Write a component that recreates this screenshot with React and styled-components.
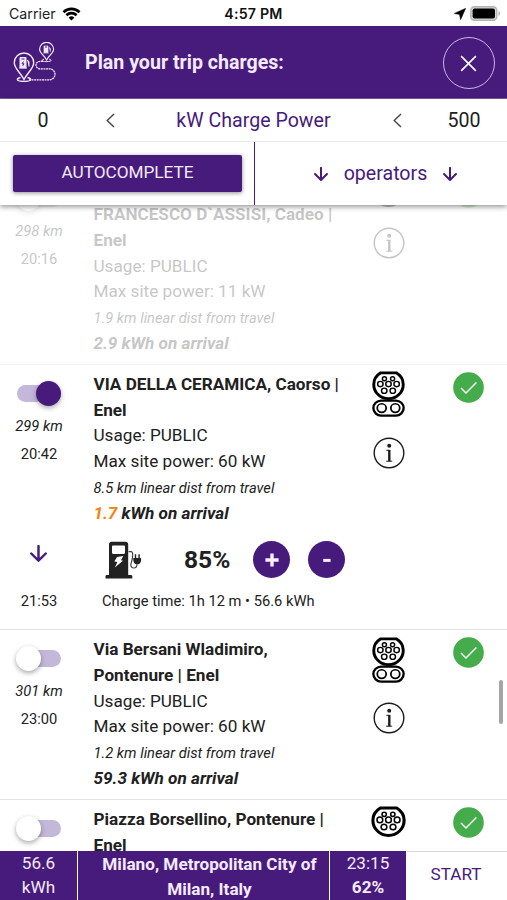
import styled, { createGlobalStyle } from "styled-components";

const stops = [
  {
    name: "\nFRANCESCO D`ASSISI, Cadeo |\nEnel",
    km: 298,
    time: "20:16",
    power: 11,
    distance: "1.9",
    arrival: "2.9",
    connectors: ["type2"],
    disabled: true,
  },
  {
    name: "VIA DELLA CERAMICA, Caorso |\nEnel",
    km: 299,
    time: "20:42",
    power: 60,
    distance: "8.5",
    arrival: "1.7",
    connectors: ["type2", "dc"],
    low: true,
    charge: { end: "21:53", level: 85, text: "Charge time: 1h 12 m • 56.6 kWh" },
  },
  {
    name: "Via Bersani Wladimiro,\nPontenure | Enel",
    km: 301,
    time: "23:00",
    power: 60,
    distance: "1.2",
    arrival: "59.3",
    connectors: ["type2", "dc"],
  },
  {
    name: "Piazza Borsellino, Pontenure |\nEnel",
    connectors: ["type2"],
  },
];

export default function App() {
  return (
    <Screen>
      <GlobalStyle />
      <StatusBar>
        <Carrier>
          Carrier <WifiIcon />
        </Carrier>
        <Clock>4:57 PM</Clock>
        <StatusIcons>
          <LocationIcon />
          <BatteryIcon />
        </StatusIcons>
      </StatusBar>

      <Header>
        <TripIcon />
        <HeaderTitle>Plan your trip charges:</HeaderTitle>
        <CloseButton aria-label="close">
          <svg width="17" height="17" viewBox="0 0 18 18" fill="none" stroke="#fff" strokeWidth="1.7">
            <path d="M1.2 1.2l15.6 15.6M16.8 1.2L1.2 16.8" />
          </svg>
        </CloseButton>
      </Header>

      <Filters>
        <PowerRow>
          <span>0</span>
          <Chevron />
          <PowerLabel>kW Charge Power</PowerLabel>
          <Chevron />
          <span>500</span>
        </PowerRow>
        <ActionRow>
          <ActionCell>
            <AutoButton>AUTOCOMPLETE</AutoButton>
          </ActionCell>
          <Operators>
            <ArrowDown size={14} />
            <span>operators</span>
            <ArrowDown size={14} />
          </Operators>
        </ActionRow>
      </Filters>

      <List>
        <Stops>
          {stops.map((stop) => (
            <Stop key={stop.name} stop={stop} />
          ))}
        </Stops>
        <ScrollThumb />
      </List>

      <Footer>
        <FooterCell>
          56.6
          <br />
          kWh
        </FooterCell>
        <Destination>
          Milano, Metropolitan City of
          <br />
          Milan, Italy
        </Destination>
        <FooterCell>
          23:15
          <br />
          <b>62%</b>
        </FooterCell>
        <StartButton>START</StartButton>
      </Footer>
    </Screen>
  );
}

function Stop({ stop }) {
  return (
    <StopItem $disabled={stop.disabled}>
      <StopRow>
        <TimeColumn>
          <Toggle $on={!!stop.charge}>
            <Knob $on={!!stop.charge} />
          </Toggle>
          {stop.km && <Km>{stop.km} km</Km>}
          {stop.time && <Time>{stop.time}</Time>}
        </TimeColumn>
        <Info>
          <Name>{stop.name}</Name>
          {stop.power && (
            <>
              <div>Usage: PUBLIC</div>
              <div>Max site power: {stop.power} kW</div>
              <Distance>{stop.distance} km linear dist from travel</Distance>
              <Arrival>
                <Energy $low={stop.low}>{stop.arrival}</Energy> kWh on arrival
              </Arrival>
            </>
          )}
        </Info>
        <Connectors>
          {stop.connectors.includes("dc") ? <ComboIcon /> : <Type2Icon />}
          {stop.power && <InfoIcon />}
        </Connectors>
        <StatusColumn>
          <CheckIcon />
        </StatusColumn>
      </StopRow>
      {stop.charge && (
        <ChargePanel>
          <ChargeControls>
            <ArrowCell>
              <ArrowDown size={17} />
            </ArrowCell>
            <PumpIcon />
            <Level>{stop.charge.level}%</Level>
            <RoundButton>
              <svg width="14" height="14" viewBox="0 0 14 14" stroke="#f6effd" strokeWidth="3.4">
                <path d="M7 .4v13.2M.4 7h13.2" />
              </svg>
            </RoundButton>
            <RoundButton>
              <svg width="14" height="14" viewBox="0 0 14 14" stroke="#f6effd" strokeWidth="3">
                <path d="M3.2 7.4h7.4" />
              </svg>
            </RoundButton>
          </ChargeControls>
          <ChargeSummary>
            <ChargeEnd>{stop.charge.end}</ChargeEnd>
            <span>{stop.charge.text}</span>
          </ChargeSummary>
        </ChargePanel>
      )}
    </StopItem>
  );
}

function WifiIcon() {
  return (
    <svg width="19" height="14" viewBox="0 0 18 14" fill="none" stroke="#000" strokeWidth="2.7">
      <path d="M1 5.2a11.4 11.4 0 0 1 16 0" />
      <path d="M3.9 8.3a7.3 7.3 0 0 1 10.2 0" />
      <path d="M9 13.6L6.1 10.7a4.1 4.1 0 0 1 5.8 0z" fill="#000" stroke="none" />
    </svg>
  );
}

function LocationIcon() {
  return (
    <svg width="12" height="12" viewBox="0 0 12 12">
      <path d="M11.7.3L.3 5.4l5.2 1.1 1.1 5.2z" fill="#000" stroke="#000" strokeWidth=".5" />
    </svg>
  );
}

function BatteryIcon() {
  return (
    <svg width="31" height="15" viewBox="0 0 31 15">
      <rect x=".8" y=".8" width="26" height="13.4" rx="3.6" fill="#d8d8d8" stroke="#b4b4b4" strokeWidth="1.4" />
      <rect x="2.6" y="2.4" width="22.4" height="10.2" rx="2" fill="#000" />
      <path d="M28.5 5v5c2-.8 2-4.2 0-5z" fill="#b4b4b4" />
    </svg>
  );
}

function TripIcon() {
  return (
    <svg width="44" height="42" viewBox="0 0 44 42" fill="none" stroke="#f1e8fb" strokeWidth="1.4">
      <path d="M11 37.5C7.5 30.5 1.3 26.5 1.3 20.7a9.7 9.7 0 0 1 19.4 0c0 5.8-6.2 9.8-9.7 16.8z" />
      <path d="M7.5 35.5c-5 1.2-4.3 3.9 3.5 3.9s8.5-2.7 3.5-3.9" />
      <path d="M33.6 18c-2.5-4.8-7-7-7-10.7a7 7 0 0 1 14 0c0 3.7-4.5 5.9-7 10.7z" strokeWidth="1.2" />
      <path d="M31 17.2c-3.2.8-2.6 2.4 2.6 2.4s5.8-1.6 2.6-2.4" strokeWidth="1" />
      <path d="M30 19.3h-2.5c-6 0-6 7.5 0 7.5h8.5c8 0 8 11 0 11H16" strokeWidth="1.3" strokeDasharray="2 .6" />
      <path d="M7 15.5h6v10.3H7zM6 26h8M14 18l2 1.5v5" fill="#f1e8fb" strokeWidth="1" />
      <path d="M31 4h4v6.5h-4zM30.2 11h5.6M36 5.3l1.3 1v3.5" fill="#f1e8fb" strokeWidth=".7" />
      <path d="M8.5 17h3M32 5h2M10.5 19.5l-1.5 2.3h2l-1.3 2" stroke="#471b7b" strokeWidth="1" />
    </svg>
  );
}

function Chevron() {
  return (
    <svg width="9" height="15" viewBox="0 0 9 15" fill="none" stroke="#444" strokeWidth="1.4">
      <path d="M8 .9L1.2 7.5 8 14.1" />
    </svg>
  );
}

function ArrowDown({ size }) {
  return (
    <svg width={size} height={size} viewBox="0 0 16 16" fill="none" stroke="#471b7b" strokeWidth="2.3" strokeLinejoin="round" strokeLinecap="round">
      <path d="M8 1v13.6M1.2 8L8 14.8 14.8 8" />
    </svg>
  );
}

function Type2Face() {
  return (
    <>
      <path
        d="M10 1.9h16c4.8 3 7.2 7.5 7.2 12.4a15.2 15.2 0 0 1-30.4 0C2.8 9.4 5.2 4.9 10 1.9z"
        strokeWidth="3"
      />
      <g strokeWidth="1.5">
        <circle cx="13.8" cy="8.3" r="2.1" />
        <circle cx="22.2" cy="8.3" r="2.1" />
        <circle cx="9.6" cy="13.9" r="2.8" />
        <circle cx="18" cy="13.9" r="2.8" />
        <circle cx="26.4" cy="13.9" r="2.8" />
        <circle cx="13.6" cy="21" r="2.8" />
        <circle cx="22.4" cy="21" r="2.8" />
      </g>
    </>
  );
}

function Type2Icon() {
  return (
    <svg width="37" height="31" viewBox="0 0 36 31" fill="none" stroke="#000" preserveAspectRatio="none">
      <Type2Face />
    </svg>
  );
}

function ComboIcon() {
  return (
    <svg width="33" height="46" viewBox="1 0 34 49" fill="none" stroke="#000" preserveAspectRatio="none">
      <Type2Face />
      <rect x="2.4" y="31.5" width="31.2" height="16" rx="8" strokeWidth="2.4" />
      <circle cx="11" cy="39.5" r="4.6" strokeWidth="1.8" />
      <circle cx="25" cy="39.5" r="4.6" strokeWidth="1.8" />
    </svg>
  );
}

function InfoIcon() {
  return (
    <svg width="32" height="32" viewBox="0 0 32 32" fill="none" stroke="#1c1c1c" strokeWidth="1.4">
      <circle cx="16" cy="16" r="14.8" />
      <circle cx="16.2" cy="8.8" r="2" fill="#1c1c1c" stroke="none" />
      <path d="M13.4 13.3h3M13.2 24.2h6" strokeWidth="1" />
      <path d="M16.3 12.9v11.4" strokeWidth="2.4" />
    </svg>
  );
}

function CheckIcon() {
  return (
    <svg width="31" height="31" viewBox="0 0 31 31" fill="none">
      <circle cx="15.5" cy="15.5" r="15.3" fill="#45ac4b" />
      <path d="M8 16l5 5L23.4 10.6" stroke="#fff" strokeWidth="1.4" />
    </svg>
  );
}

function PumpIcon() {
  return (
    <svg width="37" height="38" viewBox="0 0 37 38" fill="#222">
      <path fillRule="evenodd" d="M4 34V3.5C4 1.8 5 .8 6.7.8h13.8c1.7 0 2.7 1 2.7 2.7V34h2.6c1 0 1.5.6 1.5 1.4v2H.5v-2C.5 34.6 1 34 2 34zM8.2 4.4c-.7 0-1.2.5-1.2 1.2v6.2c0 .7.5 1.2 1.2 1.2h10.6c.7 0 1.2-.5 1.2-1.2V5.6c0-.7-.5-1.2-1.2-1.2z" />
      <path d="M12 16l6.3-1-2.3 4.2 2 .6-8.2 6.7 2.6-5.4-3-.5z" fill="#fff" />
      <path d="M23.5 10.6h2.3c2 0 1.8 2 1.8 4 0 5-1.8 6.8-1.8 9.4 0 4.2 6.2 4 6.2-.8" fill="none" stroke="#444" strokeWidth="1.2" />
      <path d="M28.3 17h7.8v2.3c0 2.3-1.5 4-3 4h-1.8c-1.5 0-3-1.7-3-4zM29.8 13.3h1.4V17h-1.4zM33.4 13.3h1.4V17h-1.4z" />
    </svg>
  );
}

const purple = "#471b7b";

const GlobalStyle = createGlobalStyle`
  * {
    box-sizing: border-box;
  }

  body {
    margin: 0;
    background: #fff;
    color: #212121;
    font-family: Roboto, sans-serif;
    overflow: hidden;
  }

  button {
    font-family: inherit;
    padding: 0;
    border: none;
  }

  svg {
    display: block;
    flex-shrink: 0;
  }
`;

const Screen = styled.div`
  width: 507px;
  height: 900px;
  display: flex;
  flex-direction: column;
  overflow: hidden;
`;

const StatusBar = styled.div`
  height: 26px;
  flex-shrink: 0;
  display: grid;
  grid-template-columns: 1fr auto 1fr;
  align-items: center;
  padding: 1px 6px 0 9px;
  font-family: Inter, sans-serif;
  color: #222;
`;

const Carrier = styled.div`
  display: flex;
  align-items: center;
  gap: 6px;
  font-size: 14.2px;
`;

const Clock = styled.div`
  margin-right: 3px;
  font-size: 14.2px;
  font-weight: 600;
  letter-spacing: 0.2px;
  color: #111;
`;

const StatusIcons = styled.div`
  display: flex;
  justify-content: flex-end;
  align-items: center;
  gap: 4px;
`;

const Header = styled.header`
  height: 73px;
  flex-shrink: 0;
  display: flex;
  align-items: center;
  padding: 1px 12px 0 13px;
  background: ${purple};
  border-bottom: 1px solid #7c5ba3;
`;

const HeaderTitle = styled.h1`
  flex: 1;
  margin: 0 0 1px 28px;
  font-size: 19.6px;
  font-weight: 700;
  color: #f3eafc;
`;

const CloseButton = styled.button`
  width: 52px;
  height: 52px;
  margin-top: 1px;
  padding-right: 1px;
  display: flex;
  align-items: center;
  justify-content: center;
  border: 1.5px solid #cdb4ea;
  border-radius: 50%;
  background: transparent;
`;

const Filters = styled.section`
  position: relative;
  z-index: 2;
  flex-shrink: 0;
  height: 106px;
  background: #fff;
  box-shadow: 0 2px 5px rgba(0, 0, 0, 0.4);
`;

const PowerRow = styled.div`
  height: 43px;
  padding-top: 1px;
  display: grid;
  grid-template-columns: 86px 48px 239px 48px 86px;
  align-items: center;
  justify-items: center;
  border-bottom: 1px solid #e8e8e8;
  font-size: 19.6px;
`;

const PowerLabel = styled.span`
  color: ${purple};
`;

const ActionRow = styled.div`
  display: flex;
  height: 63px;
`;

const ActionCell = styled.div`
  width: 255px;
  padding: 13px 12px 12px 13px;
  border-right: 1px solid ${purple};
`;

const AutoButton = styled.button`
  width: 229px;
  height: 37px;
  padding-bottom: 3px;
  border-radius: 2px;
  background: ${purple};
  color: #f3eafc;
  font-size: 17.2px;
  box-shadow: 0 1px 4px rgba(0, 0, 0, 0.45);
`;

const Operators = styled.div`
  flex: 1;
  display: flex;
  align-items: center;
  justify-content: center;
  gap: 16px;
  padding-left: 9px;
  font-size: 19.6px;
  color: ${purple};
`;

const List = styled.main`
  position: relative;
  flex: 1;
  min-height: 0;
  overflow: hidden;
`;

const Stops = styled.div`
  margin-top: -35.3px;
`;

const ScrollThumb = styled.div`
  position: absolute;
  top: 475px;
  right: 4px;
  width: 4px;
  height: 44px;
  border-radius: 2px;
  background: #a5a5a5;
`;

const StopItem = styled.article`
  padding: 6.8px 0 7.3px;
  border-bottom: 1px solid ${({ $disabled }) => ($disabled ? "#f1f1f1" : "#e4e4e4")};

  & > * {
    opacity: ${({ $disabled }) => ($disabled ? 0.25 : 1)};
  }
`;

const StopRow = styled.div`
  display: grid;
  grid-template-columns: 78px 270px 81px 79px;
`;

const TimeColumn = styled.div`
  display: flex;
  flex-direction: column;
  align-items: center;
  padding-top: 13.2px;
  font-size: 14.7px;
`;

const Toggle = styled.div`
  width: 44px;
  height: 17px;
  display: flex;
  align-items: center;
  justify-content: ${({ $on }) => ($on ? "flex-end" : "flex-start")};
  border-radius: 9px;
  background: #c4b8da;
`;

const Knob = styled.div`
  width: 25px;
  height: 25px;
  flex-shrink: 0;
  margin-left: -1px;
  border-radius: 50%;
  background: ${({ $on }) => ($on ? purple : "#fff")};
  box-shadow: 0 2px 5px rgba(0, 0, 0, 0.35);
`;

const Km = styled.div`
  margin-top: 13px;
  line-height: 22px;
  font-style: italic;
`;

const Time = styled.div`
  margin-top: 6px;
  line-height: 22px;
`;

const Info = styled.div`
  padding-left: 15.5px;
  font-size: 17.15px;
  line-height: 25.72px;
  white-space: nowrap;
`;

const Name = styled.div`
  font-weight: 700;
  white-space: pre;
`;

const Distance = styled.div`
  padding-top: 1px;
  font-size: 14.7px;
  font-style: italic;
`;

const Arrival = styled.div`
  margin-top: -0.7px;
  font-weight: 700;
  font-style: italic;
`;

const Energy = styled.span`
  color: ${({ $low }) => ($low ? "#f5820b" : "inherit")};
`;

const Connectors = styled.div`
  display: flex;
  flex-direction: column;
  align-items: center;
  gap: 19.5px;
  margin-top: -0.5px;
`;

const StatusColumn = styled.div`
  display: flex;
  justify-content: center;
`;

const ChargePanel = styled.div`
  padding-top: 14px;
`;

const ChargeControls = styled.div`
  display: flex;
  align-items: center;
  height: 38px;
`;

const ArrowCell = styled.div`
  width: 77px;
  display: flex;
  justify-content: center;
  margin: 0 28px 12px 0;
`;

const Level = styled.div`
  width: 69px;
  margin-left: 42px;
  font-size: 24.5px;
  font-weight: 700;
`;

const RoundButton = styled.button`
  width: 37px;
  height: 37px;
  display: flex;
  align-items: center;
  justify-content: center;
  border-radius: 50%;
  background: ${purple};

  & + & {
    margin-left: 18px;
  }
`;

const ChargeSummary = styled.div`
  display: flex;
  margin-top: 10.2px;
  font-size: 14.7px;
  line-height: 22px;
  height: 33.3px;
  padding-top: 1px;
`;

const ChargeEnd = styled.div`
  width: 78px;
  margin-right: 24px;
  text-align: center;
`;

const Footer = styled.footer`
  height: 49px;
  flex-shrink: 0;
  display: grid;
  grid-template-columns: 78px 252px 77px 100px;
`;

const FooterCell = styled.div`
  background: ${purple};
  border-right: 1px solid #fff;
  color: #f3eafc;
  font-size: 17.15px;
  line-height: 24px;
  text-align: center;
`;

const Destination = styled(FooterCell)`
  height: 49px;
  padding: 1px 0 0 12px;
  font-weight: 700;
  line-height: 25px;
`;

const StartButton = styled.button`
  padding: 0 2px 5px 0;
  border-top: 1px solid #d5d5d5;
  background: #fff;
  color: ${purple};
  font-size: 17.15px;
`;
